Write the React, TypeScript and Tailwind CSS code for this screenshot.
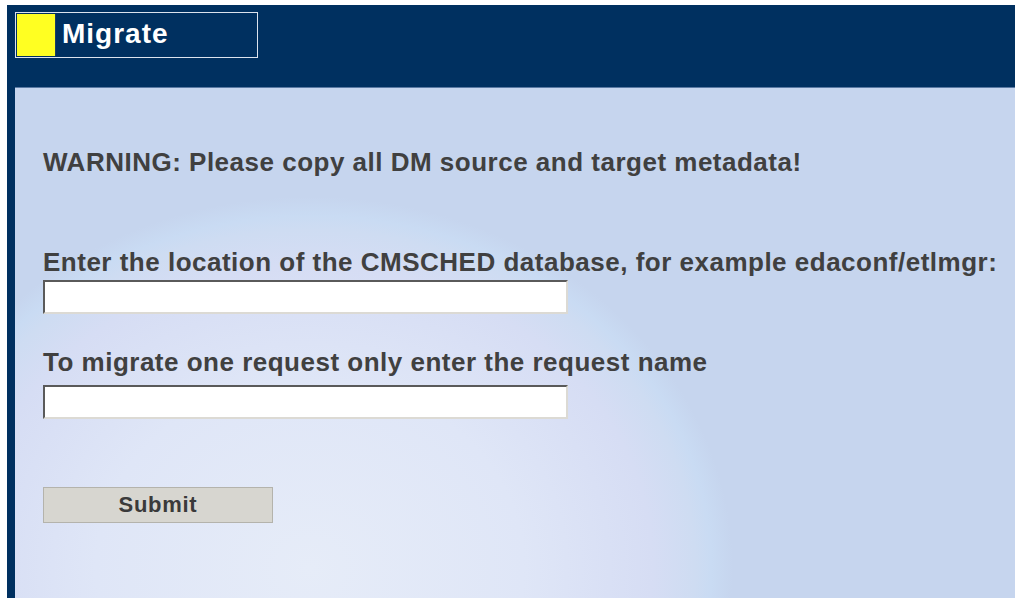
export default function App() {
  return (
    <div className="h-[598px] w-[1015px] overflow-hidden bg-white pl-[7px] pt-[5px] font-['Liberation_Sans',Arial,sans-serif]">
      <div className="flex h-full flex-col bg-[#003060]">
        {/* header band with the page tab */}
        <div className="h-[82px] shrink-0 pl-[8px] pt-[7px]">
          <div className="flex h-[46px] w-[243px] border border-[#dce3ee] p-px">
            <div className="h-full w-[38px] bg-[#ffff22]" />
            <div className="h-full w-px bg-[#1c3d63]" />
            <span className="ml-[6px] mt-[6px] text-[28px] font-bold leading-[28px] tracking-[1px] text-white">
              Migrate
            </span>
          </div>
        </div>

        {/* form panel */}
        <div className="ml-[8px] flex-1 border-t border-[#5a7aa4] bg-[#c6d5ee] bg-[radial-gradient(ellipse_535px_470px_at_295px_480px,#e6ecf8_0%,#dfe6f7_40%,#d6ddf4_64%,#cedcf2_72%,#c9dbf3_75%,#c6d5ee_79%)] pl-[28px] pt-[62px] text-[#404040]">
          <p className="text-[26px] font-bold leading-[24px] tracking-[0.5px]">
            WARNING: Please copy all DM source and target metadata!
          </p>

          <p className="mt-[76px] whitespace-nowrap text-[26px] font-bold leading-[24px] tracking-[0.5px]">
            Enter the location of the CMSCHED database, for example edaconf/etlmgr:
          </p>
          <input
            type="text"
            className="mt-[6px] block h-[34px] w-[525px] border-2 border-b-[#dcdad4] border-l-[#5a5a5a] border-r-[#dcdad4] border-t-[#5a5a5a] bg-white outline-none"
          />

          <p className="mt-[36px] text-[26px] font-bold leading-[24px] tracking-[0.5px]">
            To migrate one request only enter the request name
          </p>
          <input
            type="text"
            className="mt-[11px] block h-[34px] w-[525px] border-2 border-b-[#dcdad4] border-l-[#5a5a5a] border-r-[#dcdad4] border-t-[#5a5a5a] bg-white outline-none"
          />

          <button
            type="button"
            className="mt-[68px] block h-[36px] w-[230px] border border-[#b4b3ac] bg-[#d7d6d0] text-[22px] font-bold leading-none tracking-[0.7px] text-[#3a3a3a]"
          >
            Submit
          </button>
        </div>
      </div>
    </div>
  );
}
